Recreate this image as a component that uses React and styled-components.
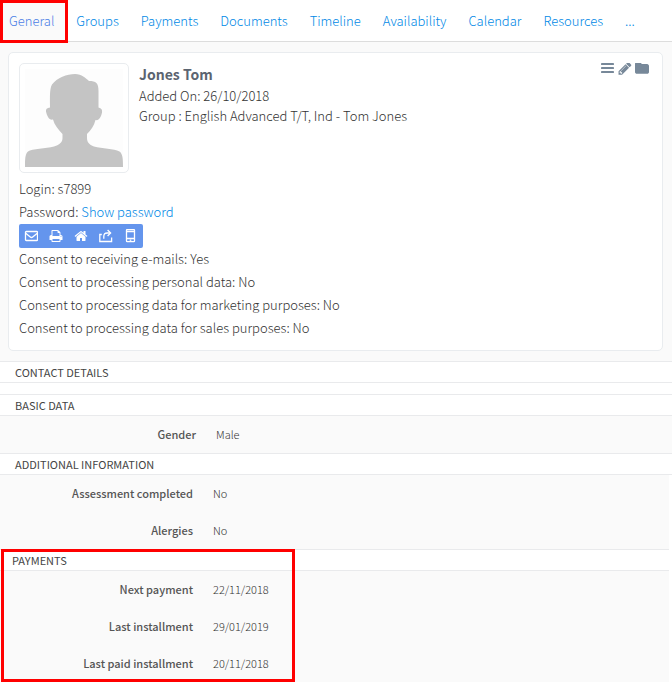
import { styled, createGlobalStyle } from "styled-components";

const tabs = [
  "General",
  "Groups",
  "Payments",
  "Documents",
  "Timeline",
  "Availability",
  "Calendar",
  "Resources",
  "...",
];

const consents = [
  { label: "Consent to receiving e-mails", value: "Yes" },
  { label: "Consent to processing personal data", value: "No" },
  { label: "Consent to processing data for marketing purposes", value: "No" },
  { label: "Consent to processing data for sales purposes", value: "No" },
];

const basicData = [{ label: "Gender", value: "Male" }];

const additionalInfo = [
  { label: "Assessment completed", value: "No" },
  { label: "Alergies", value: "No" },
];

const payments = [
  { label: "Next payment", value: "22/11/2018" },
  { label: "Last installment", value: "29/01/2019" },
  { label: "Last paid installment", value: "20/11/2018" },
];

const BarsIcon = () => (
  <svg width="14" height="14" viewBox="0 0 14 14" fill="currentColor">
    <rect x="0" y="0" width="13" height="2" rx="0.4" />
    <rect x="0" y="4" width="13" height="2" rx="0.4" />
    <rect x="0" y="8" width="13" height="2" rx="0.4" />
  </svg>
);

const PencilIcon = () => (
  <svg width="14" height="14" viewBox="64 256 1664 1664" fill="currentColor">
    <path d="M491 1536l91-91-235-235-91 91v107h128v128h107zm523-928q0-22-22-22-10 0-17 7l-542 542q-7 7-7 17 0 22 22 22 10 0 17-7l542-542q7-7 7-17zm-54-192l416 416-832 832h-416v-416zm683 96q0 53-37 90l-166 166-416-416 166-165q36-38 90-38 53 0 91 38l235 234q37 39 37 91z" />
  </svg>
);

const FolderIcon = () => (
  <svg width="14" height="14" viewBox="64 256 1664 1664" fill="currentColor">
    <path d="M1728 608v704q0 92-66 158t-158 66h-1216q-92 0-158-66t-66-158v-960q0-92 66-158t158-66h320q92 0 158 66t66 158v32h672q92 0 158 66t66 158z" />
  </svg>
);

const MailIcon = () => (
  <svg
    width="14"
    height="14"
    viewBox="0 0 14 14"
    fill="none"
    stroke="currentColor"
    strokeWidth="1.3"
  >
    <rect x="1.5" y="2.5" width="12" height="9" rx="0.8" />
    <path d="M1.7 4.2L6.3 8q1.2 1 2.4 0l4.6-3.8" />
  </svg>
);

const PrintIcon = () => (
  <svg width="14" height="14" viewBox="0 0 1792 1792" fill="currentColor">
    <path d="M448 1536h896v-256h-896v256zm0-640h896v-384h-160q-40 0-68-28t-28-68v-160h-640v640zm1152 64q0-26-19-45t-45-19-45 19-19 45 19 45 45 19 45-19 19-45zm128 0v416q0 13-9.5 22.5t-22.5 9.5h-224v160q0 40-28 68t-68 28h-960q-40 0-68-28t-28-68v-160h-224q-13 0-22.5-9.5t-9.5-22.5v-416q0-79 56.5-135.5t135.5-56.5h64v-544q0-40 28-68t68-28h672q40 0 88 20t76 48l152 152q28 28 48 76t20 88v256h64q79 0 135.5 56.5t56.5 135.5z" />
  </svg>
);

const HomeIcon = () => (
  <svg width="14" height="14" viewBox="0 0 1792 1792" fill="currentColor">
    <path d="M1472 992v480q0 26-19 45t-45 19h-384v-384h-256v384h-384q-26 0-45-19t-19-45v-480q0-1 .5-3t.5-3l575-474 575 474q1 2 1 6zm223-69l-62 74q-8 9-21 11h-3q-13 0-21-7l-692-577-692 577q-12 8-24 7-13-2-21-11l-62-74q-8-10-7-23.5t11-21.5l719-599q32-26 76-26t76 26l244 204v-195q0-14 9-23t23-9h192q14 0 23 9t9 23v408l219 182q10 8 11 21.5t-7 23.5z" />
  </svg>
);

const ShareIcon = () => (
  <svg
    width="14"
    height="14"
    viewBox="0 0 14 14"
    fill="none"
    stroke="currentColor"
    strokeWidth="1.3"
  >
    <path d="M2.8 5.5H0.8v7h11.8v-4" />
    <path d="M4.8 9.8V7.6q0-3.6 3.4-3.6h3.2" />
    <path d="M8.6 1l3 3-3 3" />
  </svg>
);

const PhoneIcon = () => (
  <svg
    width="14"
    height="14"
    viewBox="0 0 14 14"
    fill="none"
    stroke="currentColor"
    strokeWidth="1.3"
  >
    <rect x="2.5" y="0.6" width="8" height="12" rx="0.6" />
    <path d="M2.5 2.5h8M2.5 9.5h8" />
    <path d="M5.7 11.2h1.6" />
  </svg>
);

const AvatarIcon = () => (
  <svg width="98" height="98" viewBox="0 0 98 98">
    <rect width="98" height="98" fill="#fdfdfd" />
    <path
      fill="#c4c4c4"
      d="M0 98C0 91 0 85 3 82.500C7 79.500 21 79.500 29 77.500C35 75.500 37.500 73 37.500 69V65C33 60 29.500 56 28 50.500C24 51.500 22 47 21 42.500C20.500 40 22 39 25 38.500C25 28 24.500 20 27 15.500C32 9 42 5 50 5C57 5 60.500 9 64 12C71 12 73.500 14 73.500 22V38.500C76.500 39 77.500 41 77 43.500C76 48 74 52 70.500 51C69 57 66 61 62 65V69C62 73 64 75.500 69 77.500C77 79.500 89 79.500 94.500 82.500C98 85 98 91 98 98Z"
    />
  </svg>
);

const toolbarItems = [
  { title: "Send e-mail", Icon: MailIcon },
  { title: "Print", Icon: PrintIcon },
  { title: "Home", Icon: HomeIcon },
  { title: "Share", Icon: ShareIcon },
  { title: "Send SMS", Icon: PhoneIcon },
];

const DataSection = ({ title, rows, variant, children }) => (
  <Section $variant={variant}>
    <SectionTitle $variant={variant}>{title}</SectionTitle>
    {rows && (
      <DataList $variant={variant}>
        {rows.map(({ label, value }) => (
          <DataRow key={label} $variant={variant}>
            <dt>{label}</dt>
            <dd>{value}</dd>
          </DataRow>
        ))}
      </DataList>
    )}
    {children}
  </Section>
);

const App = () => {
  return (
    <>
      <GlobalStyle />
      <TabBar>
        {tabs.map((tab, index) => (
          <Tab key={tab} href="#" $active={index === 0}>
            {tab}
          </Tab>
        ))}
        <TabHighlight />
      </TabBar>
      <main>
        <CardArea>
          <Card>
            <HeadContainer>
              <Avatar>
                <AvatarIcon />
              </Avatar>
              <HeadText>
                <Name>Jones Tom</Name>
                <p>Added On: 26/10/2018</p>
                <p>Group : English Advanced T/T, Ind - Tom Jones</p>
              </HeadText>
              <Actions>
                <IconButton aria-label="Menu">
                  <BarsIcon />
                </IconButton>
                <IconButton aria-label="Edit">
                  <PencilIcon />
                </IconButton>
                <IconButton aria-label="Files">
                  <FolderIcon />
                </IconButton>
              </Actions>
            </HeadContainer>
            <Line>Login: s7899</Line>
            <Line>
              Password: <Link href="#">Show password</Link>
            </Line>
            <Toolbar>
              {toolbarItems.map(({ title, Icon }) => (
                <ToolButton key={title} aria-label={title}>
                  <Icon />
                </ToolButton>
              ))}
            </Toolbar>
            {consents.map(({ label, value }) => (
              <Line key={label}>
                {label}: {value}
              </Line>
            ))}
          </Card>
        </CardArea>
        <DataSection title="CONTACT DETAILS">
          <EmptyBody />
        </DataSection>
        <DataSection title="BASIC DATA" rows={basicData} />
        <DataSection
          title="ADDITIONAL INFORMATION"
          rows={additionalInfo}
          variant="nested"
        />
        <DataSection title="PAYMENTS" rows={payments} variant="inset">
          <SectionHighlight />
        </DataSection>
      </main>
    </>
  );
};

// The Latin letters of the CJK family are the Source Sans ones
const GlobalStyle = createGlobalStyle`
  * {
    box-sizing: border-box;
  }

  body {
    margin: 0;
    background: #fff;
    color: #333;
    font-family: "Source Sans Pro", "Noto Sans CJK SC", sans-serif;
    font-size: 13px;
    font-weight: 300;
    line-height: 20px;
  }

  p, h1, h2, dl, dd {
    margin: 0;
  }

  svg {
    display: block;
  }
`;

const TabBar = styled.nav`
  position: relative;
  display: flex;
  height: 42px;
  border-bottom: 1px solid #ddd;
`;

const Tab = styled.a`
  padding: 11px 12px 10px 9px;
  border-right: 1px solid ${({ $active }) => ($active ? "#ddd" : "transparent")};
  background: ${({ $active }) => ($active ? "#fafafa" : "transparent")};
  color: ${({ $active }) => ($active ? "#4a80e6" : "#0088e6")};
  text-decoration: none;
`;

const Highlight = styled.div`
  position: absolute;
  border: 3px solid #f00;
  pointer-events: none;
`;

const TabHighlight = styled(Highlight)`
  top: 0;
  left: 0;
  width: 68px;
  height: 43px;
`;

const SectionHighlight = styled(Highlight)`
  top: 0;
  bottom: 0;
  left: 1px;
  width: 294px;
`;

const CardArea = styled.div`
  padding: 10px 9px 10px 8px;
  background: #fafafa;
`;

const Card = styled.section`
  padding: 10px;
  border: 1px solid #e9ecef;
  border-radius: 5px;
  background: #fff;
`;

const HeadContainer = styled.div`
  display: flex;
  align-items: flex-start;
  gap: 10px;
  margin-bottom: 5px;
`;

const Avatar = styled.div`
  padding: 5px;
  border: 1px solid #e9ecef;
  border-radius: 5px;
`;

const HeadText = styled.div`
  flex: 1;
`;

const Name = styled.h1`
  color: #5b6470;
  font-size: 14px;
  font-weight: 700;
  line-height: 23px;
`;

const Actions = styled.div`
  display: flex;
  gap: 3px;
  padding-right: 3px;
`;

const IconButton = styled.button`
  padding: 0;
  border: 0;
  background: none;
  color: #778899;
  cursor: pointer;
`;

const Line = styled.p`
  padding-bottom: 2px;
  line-height: 21px;
`;

const Link = styled.a`
  color: #0088e6;
  text-decoration: none;
`;

const Toolbar = styled.div`
  display: inline-flex;
  gap: 1px;
  border-radius: 2px;
  background: #6495ed;
  vertical-align: top;
`;

const ToolButton = styled.button`
  display: flex;
  align-items: center;
  justify-content: center;
  width: 24px;
  height: 24px;
  padding: 0;
  border: 0;
  background: none;
  color: #fff;
  cursor: pointer;
`;

const Section = styled.section`
  position: relative;
  margin-right: ${({ $variant }) => ($variant === "inset" ? "3px" : "0")};
`;

const SectionTitle = styled.h2`
  padding-left: ${({ $variant }) => ($variant === "inset" ? "12px" : "15px")};
  border: solid #e9eaec;
  border-width: 1px 0;
  background: #fff;
  color: #444;
  font-size: 11px;
  font-weight: 400;
  line-height: 20px;
`;

const EmptyBody = styled.div`
  height: 11px;
`;

const DataList = styled.dl`
  margin-right: ${({ $variant }) => ($variant === "nested" ? "3px" : "0")};
  background: #fafafa;
`;

const DataRow = styled.div`
  display: grid;
  grid-template-columns: ${({ $variant }) => ($variant ? "193px" : "196px")} 1fr;
  gap: 20px;
  font-size: 11px;
  line-height: 37px;

  dt {
    color: #555;
    font-weight: 500;
    text-align: right;
  }
`;

export default App;
